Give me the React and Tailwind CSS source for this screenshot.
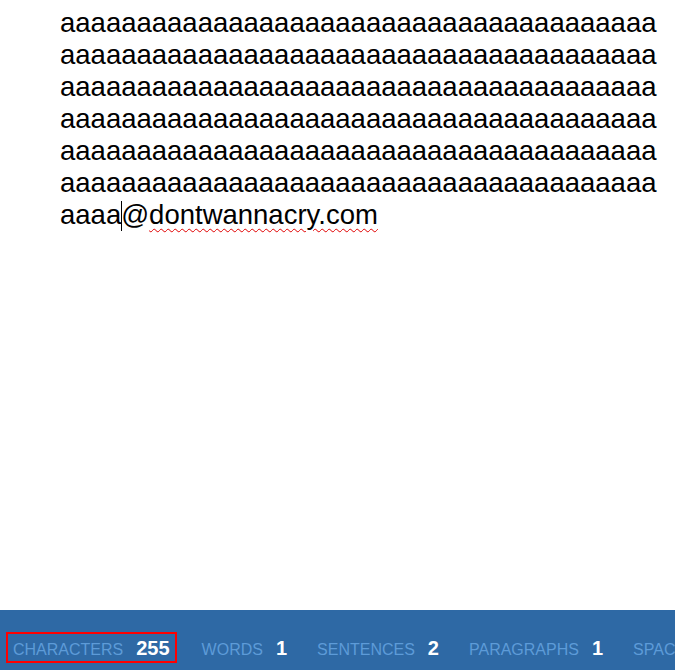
const STATS = [
  { label: 'Characters', value: 255, active: true },
  { label: 'Words', value: 1 },
  { label: 'Sentences', value: 2 },
  { label: 'Paragraphs', value: 1 },
  { label: 'Spaces', value: 0 },
];

function Stat({ label, value, active }) {
  return (
    <div
      className={`flex shrink-0 items-baseline gap-[13px] border-2 px-[5px] pt-[3px] leading-[22px] ${
        active ? 'mr-[2px] border-[#ff0000]' : 'border-transparent'
      }`}
    >
      <span className="text-[16px] uppercase text-[#5d9bd8]">{label}</span>
      <span className="text-[20px] font-bold text-white">{value}</span>
    </div>
  );
}

export default function App() {
  const filler = 'a'.repeat(234);
  return (
    <div className="flex h-[670px] w-[675px] flex-col overflow-hidden bg-white font-['Liberation_Sans',Arial,sans-serif]">
      {/* Editor */}
      <div className="flex-1 pl-[60px] pt-[7px]">
        <div className="w-[600px] break-all text-[27.5px] leading-[32px] text-black">
          {filler}aaaa
          <span className="-mr-px inline-block h-[30px] w-px bg-black align-[-7px]" />@
          <span className="underline decoration-[#e00000] decoration-wavy decoration-1 underline-offset-[4px]">
            dontwannacry.com
          </span>
        </div>
      </div>

      {/* Stats bar */}
      <div className="flex h-[60px] shrink-0 items-start gap-[16px] bg-[#2e69a5] pl-[6px] pt-[22px]">
        {STATS.map((s) => (
          <Stat key={s.label} {...s} />
        ))}
      </div>
    </div>
  );
}
